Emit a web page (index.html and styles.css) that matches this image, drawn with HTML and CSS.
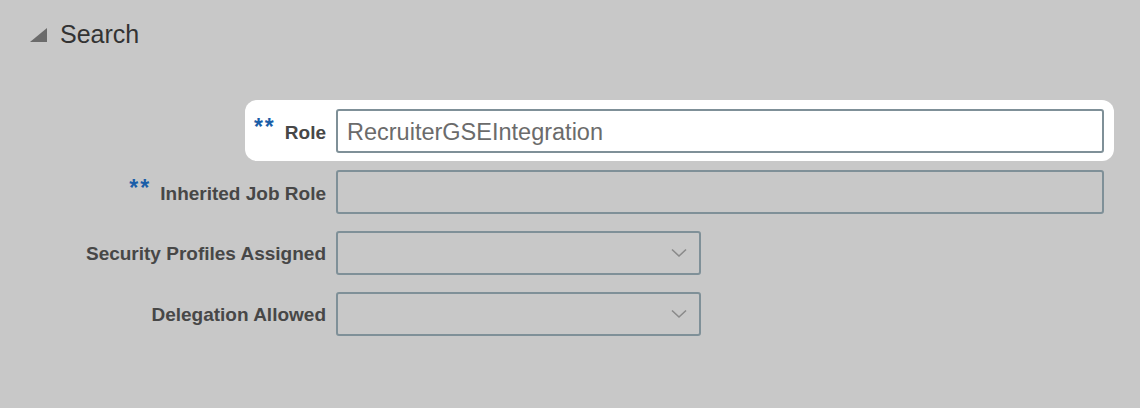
FILE: index.html
```html
<!DOCTYPE html>
<html lang="en">
<head>
  <meta charset="UTF-8">
  <title>Search</title>
  <link rel="stylesheet" href="styles.css">
</head>
<body>
  <div class="header">
    <svg class="toggle" width="17" height="14" viewBox="0 0 17 14"><polygon points="17,0 17,14 0,14" fill="#6b6b6b"/></svg>
    <h1>Search</h1>
  </div>

  <div class="form">
    <div class="row focus">
      <label class="label"><span class="req">**</span>Role</label>
      <input class="field wide" type="text" value="RecruiterGSEIntegration">
    </div>
    <div class="row">
      <label class="label"><span class="req">**</span>Inherited Job Role</label>
      <input class="field wide" type="text" value="">
    </div>
    <div class="row">
      <label class="label">Security Profiles Assigned</label>
      <div class="field select">
        <svg width="16" height="10" viewBox="0 0 16 10"><polyline points="1,1.5 8,8 15,1.5" fill="none" stroke="#8a8a8a" stroke-width="1.6"/></svg>
      </div>
    </div>
    <div class="row">
      <label class="label">Delegation Allowed</label>
      <div class="field select">
        <svg width="16" height="10" viewBox="0 0 16 10"><polyline points="1,1.5 8,8 15,1.5" fill="none" stroke="#8a8a8a" stroke-width="1.6"/></svg>
      </div>
    </div>
  </div>
</body>
</html>
```

FILE: styles.css
```css
body {
  margin: 0;
  background-color: #c8c8c8;
  font-family: 'Liberation Sans', Arial, sans-serif;
  color: #474747;
}
.header {
  display: flex;
  align-items: center;
  gap: 13px;
  height: 68px;
  padding-left: 30px;
}
.toggle {
  margin-top: 1px;
}
h1 {
  margin: 0;
  font-size: 25px;
  font-weight: normal;
  line-height: 1;
  color: #333;
}
.form {
  padding-top: 32px;
  width: 1114px;
}
.row {
  display: flex;
  align-items: center;
  gap: 10px;
  margin-top: 17px;
}
.row.focus {
  margin-top: 0;
  margin-left: 245px;
  padding: 9px 10px 8px 8px;
  background-color: #fff;
  border-radius: 12px;
}
.row.focus + .row {
  margin-top: 9px;
}
.label {
  width: 326px;
  flex-shrink: 0;
  padding-top: 1px;
  text-align: right;
  font-size: 19px;
  font-weight: bold;
  color: #474747;
}
.row.focus .label {
  width: auto;
  flex: 1;
}
.req {
  color: #1b5ea8;
  font-size: 23px;
  letter-spacing: 2px;
  margin-right: 9px;
  position: relative;
  top: -4px;
}
.field {
  box-sizing: border-box;
  height: 44px;
  border: 2px solid #7f9098;
  border-radius: 3px;
  background: transparent;
}
input.field {
  width: 768px;
  padding: 3px 9px 0;
  font-family: 'Liberation Sans', Arial, sans-serif;
  font-size: 23.5px;
  color: #6b6b6b;
  outline: none;
}
.row.focus input.field {
  background-color: #fff;
}
.select {
  width: 365px;
  display: flex;
  align-items: center;
  justify-content: flex-end;
  padding-right: 12px;
}
```
